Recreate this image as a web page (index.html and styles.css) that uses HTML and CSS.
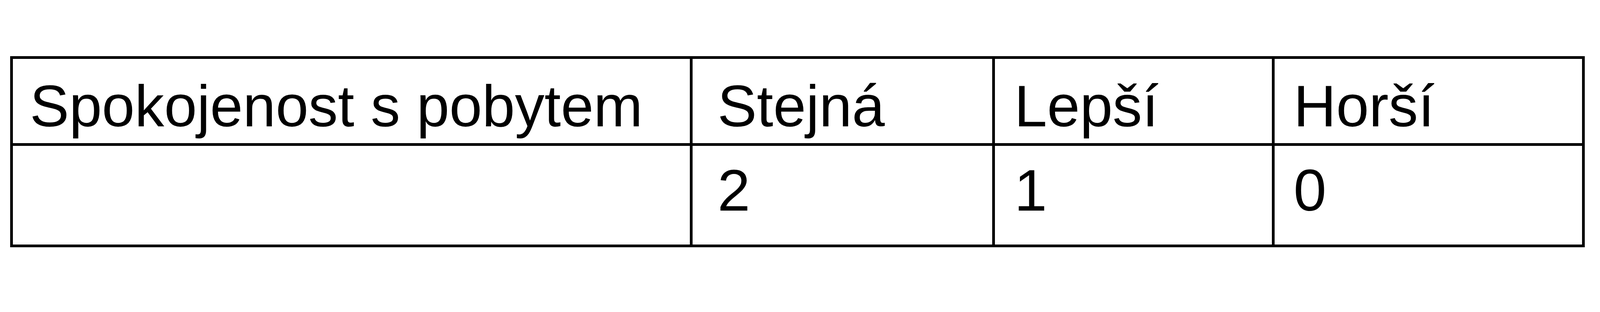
FILE: index.html
```html
<!DOCTYPE html>
<html lang="cs">
<head>
<meta charset="utf-8">
<title>Spokojenost s pobytem</title>
<link rel="stylesheet" href="styles.css">
</head>
<body>
<div class="table" role="table">
  <div class="cell r1 c1" role="cell">Spokojenost s pobytem</div>
  <div class="cell r1 c2" role="cell">Stejná</div>
  <div class="cell r1 c3" role="cell">Lepší</div>
  <div class="cell r1 c4" role="cell">Horší</div>
  <div class="cell r2 c1" role="cell"></div>
  <div class="cell r2 c2" role="cell">2</div>
  <div class="cell r2 c3" role="cell">1</div>
  <div class="cell r2 c4" role="cell">0</div>
</div>
</body>
</html>
```
FILE: styles.css
```css
html, body {
  margin: 0;
  padding: 0;
  background: #ffffff;
}
body {
  padding: 144px 0 0 0.645vw;
  font-family: "Liberation Sans", Arial, sans-serif;
  color: #000000;
}
.table {
  display: grid;
  grid-template-columns: 42.473vw 18.902vw 17.478vw 19.391vw;
  grid-template-rows: 223px 260px;
  width: max-content;
  border-left: 7px solid #000;
  border-top: 7px solid #000;
}
.cell {
  box-sizing: border-box;
  border-right: 7px solid #000;
  border-bottom: 7px solid #000;
  font-size: calc(1.757vw + 79px);
  line-height: 158px;
  white-space: nowrap;
}
.r1 { padding-top: 42px; }
.r2 { padding-top: 35px; }
.c1 { padding-left: 1.045vw; }
.c2 { padding-left: 1.557vw; }
.c3 { padding-left: 1.201vw; }
.c4 { padding-left: 1.179vw; }
```
